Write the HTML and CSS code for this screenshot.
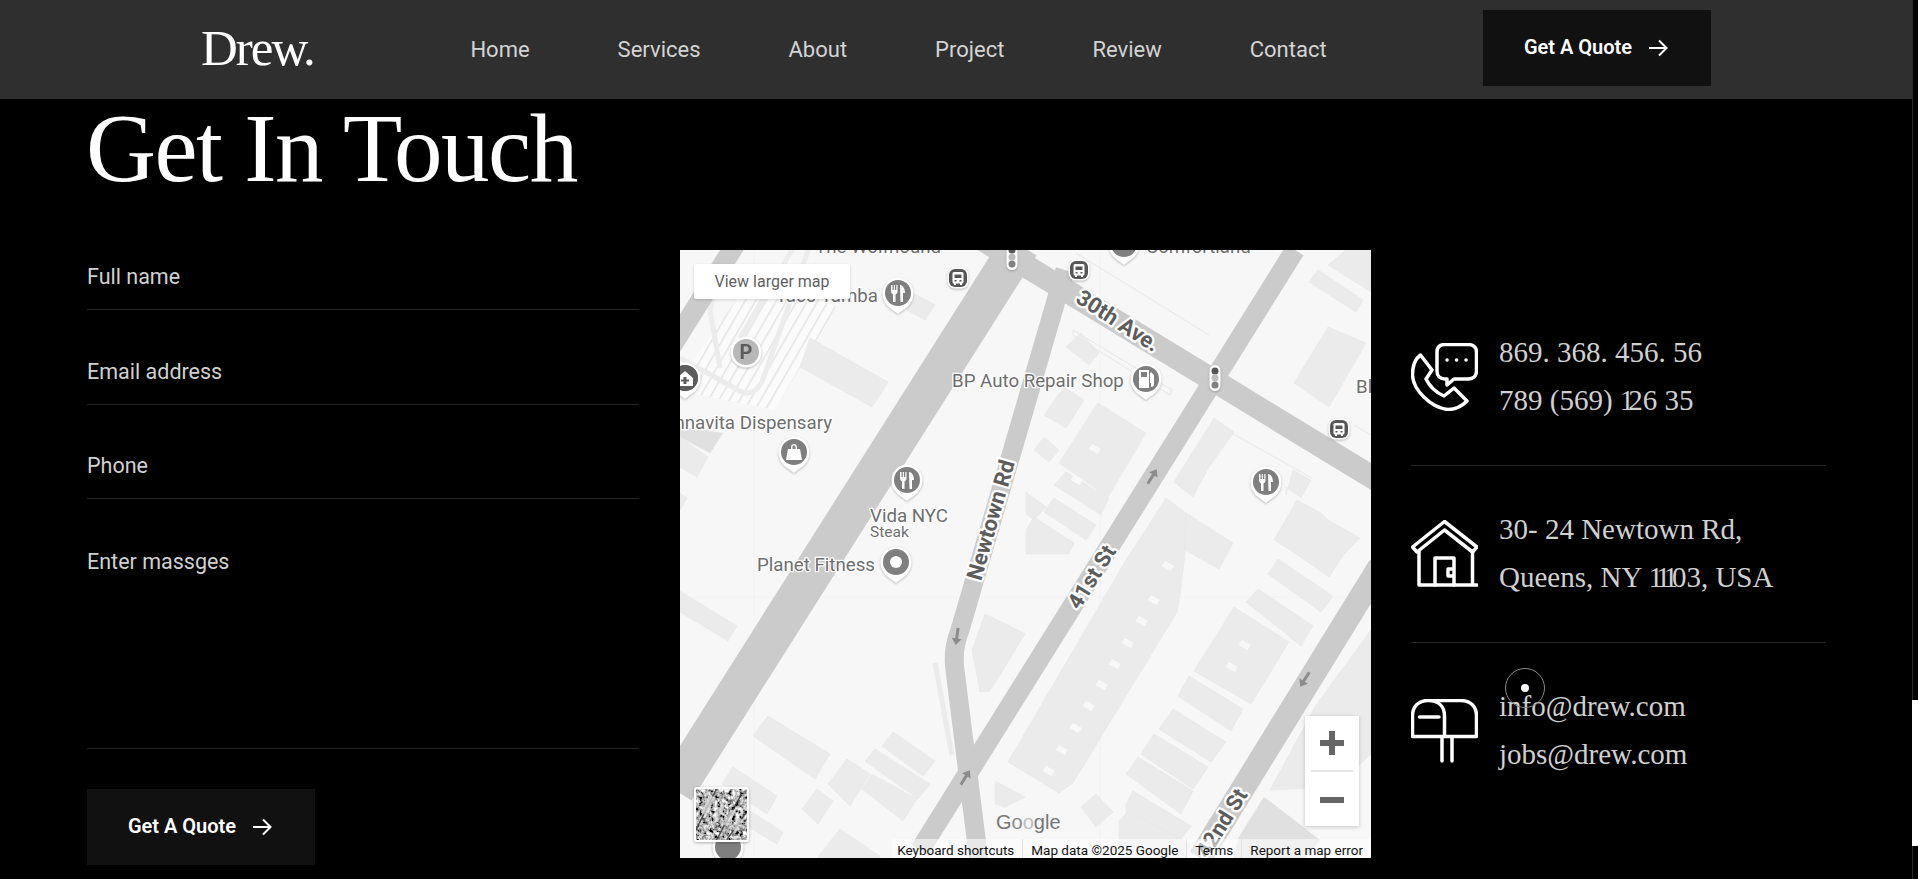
FILE: index.html
```html
<!DOCTYPE html>
<html lang="en">
<head>
    <meta charset="UTF-8">
    <meta name="viewport" content="width=device-width, initial-scale=1.0">
    <title>Drew. - Contact</title>
    <link rel="stylesheet" href="styles.css">
</head>
<body>
    <div class="page">
        <div class="main">
            <header class="site-header">
                <a class="logo" href="#">Drew.</a>
                <nav class="main-nav">
                    <a href="#">Home</a>
                    <a href="#">Services</a>
                    <a href="#">About</a>
                    <a href="#">Project</a>
                    <a href="#">Review</a>
                    <a href="#">Contact</a>
                </nav>
                <a class="btn" href="#">Get A Quote
                    <svg class="btn-arrow" viewBox="0 0 20 18"><path d="M1 9h17M11 1.500 18.500 9 11 16.500"/></svg>
                </a>
            </header>

            <section class="contact">
                <h1>Get In Touch</h1>
                <div class="contact-grid">
                    <form class="contact-form">
                        <input type="text" placeholder="Full name">
                        <input type="email" placeholder="Email address">
                        <input type="text" placeholder="Phone">
                        <textarea placeholder="Enter massges"></textarea>
                        <button class="btn" type="button">Get A Quote
                            <svg class="btn-arrow" viewBox="0 0 20 18"><path d="M1 9h17M11 1.500 18.500 9 11 16.500"/></svg>
                        </button>
                    </form>

                    <div class="map">
                        <svg class="map-canvas" viewBox="0 0 691 608">
                            <defs>
                                <pattern id="hatch" width="9" height="9" patternUnits="userSpaceOnUse" patternTransform="rotate(30)">
                                    <rect width="9" height="9" fill="#fbfbfb"/>
                                    <rect width="1.500" height="9" fill="#e4e4e4"/>
                                </pattern>
                                <g id="pin">
                                    <path class="pin-edge" d="M0 21C-4 17-15.500 13-15.500 0A15.500 15.500 0 1 1 15.500 0C15.500 13 4 17 0 21Z"/>
                                    <circle r="13" fill="#7f7f7f"/>
                                </g>
                                <g id="fork">
                                    <use href="#pin"/>
                                    <path class="pin-mark" d="M-7-8v6c0 2 1 3 2 3.500V9h2.500V1.500C-1.500 1-.5 0-.5-2v-6h-1.200v5H-3v-5h-1.200v5h-1.300v-5ZM2-8c2.500 0 5 3 5 8H5v9H2.500Z"/>
                                </g>
                                <g id="bus">
                                    <rect class="pin-edge" x="-10.500" y="-10.500" width="21" height="21" rx="7"/>
                                    <rect x="-9" y="-9" width="18" height="18" rx="6" fill="#565656"/>
                                    <path class="pin-mark" d="M-4-6H4A1.500 1.500 0 0 1 5.500-4.500V4A1.500 1.500 0 0 1 4 5.500V7H2V5.500H-2V7H-4V5.500A1.500 1.500 0 0 1-5.500 4V-4.500A1.500 1.500 0 0 1-4-6ZM-3.500-3.500V0H3.500V-3.500ZM-3.500 2V3.500H-1.500V2ZM1.500 2V3.500H3.500V2Z"/>
                                </g>
                                <g id="signal">
                                    <rect class="pin-edge" x="-5.500" y="-13" width="11" height="26" rx="5.500"/>
                                    <circle cy="-7" r="3.500" fill="#555"/>
                                    <circle r="3.500" fill="#bcbcbc"/>
                                    <circle cy="7" r="3.500" fill="#808080"/>
                                </g>
                                <path id="one-way" d="M-1.500 8V-2.500H-5L0-9 5-2.500H1.500V8Z"/>
                                <clipPath id="map-clip"><rect width="691" height="608"/></clipPath>
                            </defs>

                            <g clip-path="url(#map-clip)">
                                <rect class="map-ground" width="691" height="608"/>
                                <path class="tile-seam" d="M74 0V608M420 0V608M0 347H691"/>

                                <!-- parking lot -->
                                <path fill="url(#hatch)" d="M14 110 77 20 157 57 94 160 10 143Z"/>
                                <path class="path-light" d="M0 108 60 141Q72 148 82 132L130-5M45 -5 30 60 40 118M115-5 60 88"/>

                                <!-- buildings -->
                                <g class="bldg">
                                    <path class="bldg-dark" d="M0 177 43 183 30 203 0 187Z"/>
                                    <path d="M130 88 208 132 192 157 120 117Z"/>
                                    <path d="M233 43 255 55 245 70 227 60Z"/>
                                    <path d="M0 187 28 207 17 227 0 217ZM0 243 7 248 0 260Z"/>
                                    <path d="M386 97 401 83 419 103 409 115Z"/>
                                    <path d="M364 165 384 137 404 150 386 178Z"/>
                                    <path d="M379 213 418 153 466 183 428 247Z"/>
                                    <path d="M374 235 386 222 429 248 421 265Z"/>
                                    <path d="M364 262 374 248 416 275 406 290Z"/>
                                    <path d="M354 200 364 187 379 200 369 212Z"/>
                                    <path d="M346 242 366 257 354 270 346 264ZM346 280 354 267 394 293 389 304H346Z"/>
                                    <path d="M629 32 638 20 683 50 676 62Z"/>
                                    <path d="M614 133 648 77 686 93 649 157Z"/>
                                    <path d="M648 15 666 0H691V42Z"/>
                                    <path d="M494 232 534 168 554 182 539 203 529 217 513 247Z"/>
                                    <path d="M606 245 613 220 631 230 621 248 606 237Z"/>
                                    <path d="M594 290 617 250 641 263 648 270 680 288 664 304 649 327 616 304Z"/>
                                    <path d="M0 341 57 376 48 391 0 362Z"/>
                                    <path d="M73 486 88 466 150 504 135 529Z"/>
                                    <path d="M148 534 167 509 190 524 170 556Z"/>
                                    <path d="M122 559 137 539 153 551 138 574Z"/>
                                    <path d="M202 496 213 482 255 511 243 526Z"/>
                                    <path d="M185 511 195 499 250 534 238 549Z"/>
                                    <path d="M182 539 192 524 237 549 223 571Z"/>
                                    <path d="M42 534 53 517 97 546 87 564Z"/>
                                    <path d="M63 561 70 561 103 582 97 594 63 574Z"/>
                                    <path d="M137 608 160 579 200 606V608Z"/>
                                    <path d="M292 400 305 364 330 376 345 384 310 441 300 442Z"/>
                                    <path d="M315 531 345 547 325 557 315 554Z"/>
                                    <path d="M328 512 446 310 486 248 506 263 505 304 500 345 497 362 393 533 379 543Z"/>
                                    <path d="M506 263 553 293 539 319 505 300Z"/>
                                    <path d="M514 421 554 357 609 392 571 454Z"/>
                                    <path d="M498 446 509 426 563 459 551 481Z"/>
                                    <path d="M479 479 493 459 546 492 531 512Z"/>
                                    <path d="M461 504 474 484 528 517 513 539Z"/>
                                    <path d="M446 524 458 507 513 541 501 564Z"/>
                                    <path d="M446 554 453 541 511 576 501 589H446Z"/>
                                    <path d="M439 571 449 561 510 594 505 608H439Z"/>
                                    <path d="M566 352 578 339 633 376 621 396Z"/>
                                    <path d="M588 324 598 309 653 346 641 362Z"/>
                                    <path d="M401 557 416 544 433 562 416 577Z"/>
                                    <path d="M636 455 691 380V504L656 537 590 540Z"/>
                                    <path class="bldg-dark" d="M559 587 584 547 640 590 625 608H553Z"/>
                                </g>

                                <path class="bldg-window" d="M366 516l9 5-3.500 5-9-5ZM379 495l9 5-3.500 5-9-5ZM393 473l9 5-3.500 5-9-5ZM406 451l9 5-3.500 5-9-5ZM419 430l9 5-3.500 5-9-5ZM432 409l9 5-3.500 5-9-5ZM445 388l9 5-3.500 5-9-5ZM459 366l9 5-3.500 5-9-5ZM471 345l9 5-3.500 5-9-5ZM485 311l9 5-3.500 5-9-5ZM549 412l9 5-3.500 5-9-5ZM562 390l9 5-3.500 5-9-5ZM412 194l9 5-3.500 5-9-5ZM394 225l9 5-3.500 5-9-5Z"/>

                                <!-- thin property lines -->
                                <path class="prop-line" d="M393 80 492 140 490 145 393 85ZM396 3 529 85M546 180 632 228M674 175 691 185"/>

                                <!-- roads -->
                                <path class="road road-wide" d="M340-5-5 540"/>
                                <path class="road" d="M55-5-20 115"/>
                                <path class="road" d="M615 0 240 600"/>
                                <path class="road road-side" d="M385 20 280 380Q272 400 275 420L300 620"/>
                                <path class="road road-avenue" d="M290-18 700 232"/>
                                <path class="road road-east" d="M700 316 520 608"/>
                                <path class="path-pale" d="M255 413 272 505"/>

                                <use class="one-way" href="#one-way" transform="translate(472 227) rotate(32)"/>
                                <use class="one-way" href="#one-way" transform="translate(277 386) rotate(188)"/>
                                <use class="one-way" href="#one-way" transform="translate(285 528) rotate(32)"/>
                                <use class="one-way" href="#one-way" transform="translate(625 429) rotate(212)"/>

                                <!-- road names -->
                                <text class="road-label" text-anchor="middle" transform="translate(434 77) rotate(33)">30th Ave.</text>
                                <text class="road-label" text-anchor="middle" transform="translate(318 272) rotate(-74)">Newtown Rd</text>
                                <text class="road-label" text-anchor="middle" transform="translate(418 331) rotate(-58)">41st St</text>
                                <text class="road-label" text-anchor="middle" transform="translate(548 577) rotate(-58)">42nd St</text>

                                <!-- places -->
                                <text class="place" x="135" y="3">The Wolfhound</text>
                                <text class="place" x="466" y="3">Comfortland</text>
                                <text class="place" x="198" y="52" text-anchor="end">Taco Tamba</text>
                                <text class="place" x="272" y="137">BP Auto Repair Shop</text>
                                <text class="place" x="152" y="179" text-anchor="end">Cannavita Dispensary</text>
                                <text class="place" x="190" y="272">Vida NYC</text>
                                <text class="place place-sub" x="190" y="287">Steak</text>
                                <text class="place" x="77" y="321">Planet Fitness</text>
                                <text class="place" x="676" y="143">Bl</text>

                                <g class="pins">
                                    <g transform="translate(444 -6)"><use href="#pin"/><rect x="-10" y="-2" width="20" height="4" fill="#ddd"/></g>
                                    <use href="#fork" transform="translate(218 43)"/>
                                    <use href="#fork" transform="translate(227 230)"/>
                                    <use href="#fork" transform="translate(586 232)"/>
                                    <use href="#bus" transform="translate(278 28)"/>
                                    <use href="#bus" transform="translate(399 20)"/>
                                    <use href="#bus" transform="translate(659 179)"/>
                                    <use href="#signal" transform="translate(332 7)"/>
                                    <use href="#signal" transform="translate(535 128)"/>
                                    <g transform="translate(5 128)">
                                        <use href="#pin"/>
                                        <circle r="13" fill="#5c5c5c"/>
                                        <path class="pin-mark" d="M-8 0 0-7 8 0V8H-8ZM-1.500-1V1.500H-4V3.500H-1.500V6H1.500V3.500H4V1.500H1.500V-1Z"/>
                                    </g>
                                    <g transform="translate(66 102)">
                                        <circle class="pin-edge" r="15.500"/>
                                        <circle r="13" fill="#b8b8b8"/>
                                        <text class="pin-letter" text-anchor="middle" y="7">P</text>
                                    </g>
                                    <g transform="translate(114 202)">
                                        <use href="#pin"/>
                                        <path class="pin-mark" d="M-8 8-6-3H6L8 8ZM-3-3V-5C-3-9 3-9 3-5V-3H1.500V-5C1.500-7-1.500-7-1.500-5V-3Z"/>
                                    </g>
                                    <g transform="translate(466 129)">
                                        <use href="#pin"/>
                                        <path class="pin-mark" d="M-7-9H3V9H-7ZM-5-7V-2H1V-7ZM5-7 8-4V5Q8 8 5 8V4H4V-6Z"/>
                                    </g>
                                    <g transform="translate(216 312)">
                                        <use href="#pin"/>
                                        <circle r="6" fill="#fff"/>
                                    </g>
                                    <g transform="translate(48 597)">
                                        <use href="#pin"/>
                                    </g>
                                </g>
                            </g>
                        </svg>

                        <a class="map-larger" href="#">View larger map</a>

                        <div class="map-zoom">
                            <span class="zoom-plus"></span>
                            <span class="zoom-rule"></span>
                            <span class="zoom-minus"></span>
                        </div>

                        <div class="map-sat">
                            <svg viewBox="0 0 50 50">
                                <filter id="sat-noise" x="0" y="0" width="100%" height="100%">
                                    <feTurbulence type="fractalNoise" baseFrequency="0.28" numOctaves="3" seed="7"/>
                                    <feColorMatrix values="1.600 1.600 0 0 -1.150 1.600 1.600 0 0 -1.150 1.600 1.600 0 0 -1.150 0 0 0 0 1"/>
                                </filter>
                                <rect width="50" height="50" filter="url(#sat-noise)"/>
                                <path class="sat-shade" d="M20 0 0 40M44 6 20 50M50 22 30 50"/>
                                <path class="sat-roofs" d="M14 6l5 3-9 17-5-3ZM25 14l4 2-8 16-4-2ZM35 20l4 2-8 15-4-2ZM42 28l3 2-6 12-3-2Z"/>
                            </svg>
                        </div>

                        <span class="map-logo">G<i>o</i><b>o</b>gle</span>

                        <div class="map-attr">
                            <span>Keyboard shortcuts</span>
                            <span>Map data ©2025 Google</span>
                            <span>Terms</span>
                            <span>Report a map error</span>
                        </div>
                    </div>

                    <div class="contact-info">
                        <div class="info-row">
                            <svg class="info-icon" viewBox="0 0 67 68">
                                <path d="M9.500 12 21 27 15 36C19 44 26 50 33 53L43 45 56 58C50 64 44 66.500 37 66.500 20 65 2 47 1.500 32 1.500 23 4 16 9.500 12Z"/>
                                <path d="M36 42V36H34C29 36 26 33 26 28V9C26 4 29 1.500 34 1.500H57C62 1.500 65.500 4 65.500 9V28C65.500 33 62 36 57 36H43Z"/>
                                <path class="icon-dots" d="M36 17h.1M45.500 17h.1M55 17h.1"/>
                            </svg>
                            <p>869. 368. 456. 56<br>789 (569) <span class="narrow-one">1</span>26 35</p>
                        </div>
                        <div class="info-row">
                            <svg class="info-icon" viewBox="0 0 67 67">
                                <path d="M33.500 1.500 66 27 61.500 32 33.500 10 6 32 1.500 27Z"/>
                                <path d="M8 31V65H66M61.500 31V65"/>
                                <path d="M24 65V38H43V65M43 49H37V56H43"/>
                            </svg>
                            <p>30- 24 Newtown Rd,<br>Queens, NY <span class="narrow-one">111</span>03, USA</p>
                        </div>
                        <div class="info-row">
                            <svg class="info-icon" viewBox="0 0 67 64">
                                <path d="M1.500 37.500V17C1.500 7 8 1.500 17 1.500H50C59 1.500 65.500 7 65.500 17V37.500ZM17 1.500C27 1.500 33.500 7 33.500 17V37.500"/>
                                <path d="M8.500 18H28"/>
                                <path d="M31 38V62M41 38V62"/>
                            </svg>
                            <p>info@drew.com<br>jobs@drew.com</p>
                        </div>
                    </div>
                </div>
            </section>
        </div>
        <div class="scrollbar"><div class="scrollbar-thumb"></div></div>
    </div>

    <!-- custom cursor follower -->
    <div class="cursor"><span></span></div>
</body>
</html>
```

FILE: styles.css
```css
* {
    box-sizing: border-box;
}

html,
body {
    margin: 0;
    height: 100%;
    background: #000;
    overflow: hidden;
}

body {
    font-family: 'Roboto', sans-serif;
    color: #d0d0d0;
}

a {
    color: inherit;
    text-decoration: none;
}

.page {
    display: flex;
    height: 879px;
}

.main {
    flex: 1;
    min-width: 0;
}

/* header */
.site-header {
    display: flex;
    justify-content: space-between;
    align-items: center;
    height: 99px;
    padding: 10px 201px 13px;
    background: #2f2f2f;
}

.logo {
    width: 113px;
    font-family: 'Liberation Serif', serif;
    font-size: 51px;
    letter-spacing: -2px;
    line-height: 1;
    color: #fff;
    white-space: nowrap;
}

.main-nav {
    display: flex;
    gap: 88px;
    padding-top: 3px;
    font-size: 22px;
    color: #d4d4d4;
}

.btn {
    display: flex;
    justify-content: center;
    align-items: center;
    gap: 16px;
    width: 228px;
    height: 76px;
    padding: 0 2px 2px 0;
    border: none;
    background: #111;
    color: #fff;
    font-family: 'Roboto', sans-serif;
    font-size: 20px;
    font-weight: 600;
}

.btn-arrow {
    width: 20px;
    height: 18px;
    margin-top: 1px;
    fill: none;
    stroke: #fff;
    stroke-width: 2;
}

/* contact section */
.contact {
    padding-left: 87px;
}

.contact h1 {
    margin: 1px 0 53px -1px;
    font-family: 'Liberation Serif', serif;
    font-size: 97px;
    font-weight: 400;
    letter-spacing: -1.500px;
    line-height: 97px;
    color: #fff;
}

.contact-grid {
    display: flex;
    align-items: flex-start;
}

.contact-form {
    display: flex;
    flex-direction: column;
    width: 552px;
    margin-right: 41px;
}

.contact-form input,
.contact-form textarea {
    display: block;
    width: 100%;
    padding: 0 0 6px;
    border: none;
    border-bottom: 1px solid #262626;
    border-radius: 0;
    outline: none;
    background: transparent;
    color: #d0d0d0;
    font-family: 'Roboto', sans-serif;
    font-size: 21.500px;
}

.contact-form input {
    height: 60px;
    margin-bottom: 34.500px;
}

.contact-form textarea {
    height: 215.500px;
    padding-top: 15px;
    margin-bottom: 40px;
    resize: none;
}

.contact-form ::placeholder {
    color: #d0d0d0;
    opacity: 1;
}

/* map */
.map {
    position: relative;
    width: 691px;
    height: 608px;
    flex-shrink: 0;
    overflow: hidden;
    background: #f7f7f7;
}

.map-canvas {
    display: block;
    width: 691px;
    height: 608px;
}

.map-ground {
    fill: #f7f7f7;
}

.tile-seam {
    fill: none;
    stroke: #f2f2f2;
    stroke-width: 1;
}

.bldg path {
    fill: #ebebeb;
    stroke: #e4e4e4;
    stroke-width: 0.500;
}

.bldg .bldg-dark {
    fill: #e0e0e0;
}

.bldg-window {
    fill: #f8f8f8;
}

.prop-line {
    fill: none;
    stroke: #e8e8e8;
    stroke-width: 1;
}

.path-light {
    fill: none;
    stroke: #ececec;
    stroke-width: 5;
}

.path-pale {
    fill: none;
    stroke: #ebebeb;
    stroke-width: 5;
}

.road {
    fill: none;
    stroke: #cbcbcb;
    stroke-width: 20;
}

.road-wide {
    stroke-width: 39;
}

.road-avenue {
    stroke-width: 23;
}

.road-side {
    stroke-width: 19;
}

.road-east {
    stroke-width: 24;
}

.one-way {
    fill: #8c8c8c;
}

.road-label {
    font-family: 'Roboto', sans-serif;
    font-size: 22px;
    font-weight: 700;
    fill: #5c5c5c;
    stroke: #fff;
    stroke-width: 4.500;
    stroke-linejoin: round;
    paint-order: stroke;
}

.place {
    font-family: 'Roboto', sans-serif;
    font-size: 18.700px;
    fill: #6e6e6e;
    stroke: #fff;
    stroke-width: 2.500;
    stroke-linejoin: round;
    paint-order: stroke;
}

.place-sub {
    font-size: 15.500px;
}

.pins {
    filter: drop-shadow(0 1px 1px rgba(0, 0, 0, 0.25));
}

.pin-edge {
    fill: #fff;
}

.pin-mark {
    fill: #fff;
    fill-rule: evenodd;
}

.pin-letter {
    font-family: 'Roboto', sans-serif;
    font-size: 20px;
    font-weight: 700;
    fill: #5c5c5c;
}

.map-larger {
    position: absolute;
    left: 14px;
    top: 14px;
    display: flex;
    justify-content: center;
    align-items: center;
    width: 156px;
    height: 35px;
    border-radius: 2px;
    background: #fff;
    box-shadow: 0 1px 3px rgba(0, 0, 0, 0.15);
    color: #5f5f5f;
    font-size: 16px;
}

.map-zoom {
    position: absolute;
    left: 625px;
    top: 466px;
    width: 54px;
    height: 110px;
    background: #fff;
    box-shadow: 0 1px 4px rgba(0, 0, 0, 0.2);
}

.zoom-plus,
.zoom-minus {
    position: absolute;
    left: 15px;
    width: 24px;
    height: 6px;
    background: #666;
}

.zoom-plus {
    top: 24px;
}

.zoom-plus::after {
    content: "";
    position: absolute;
    left: 9px;
    top: -9px;
    width: 6px;
    height: 24px;
    background: #666;
}

.zoom-rule {
    position: absolute;
    left: 6px;
    top: 54px;
    width: 42px;
    height: 2px;
    background: #e6e6e6;
}

.zoom-minus {
    top: 81px;
}

.map-sat {
    position: absolute;
    left: 14px;
    top: 537px;
    width: 55px;
    height: 55px;
    border: 2px solid #fff;
    border-radius: 3px;
    box-shadow: 0 1px 3px rgba(0, 0, 0, 0.3);
    overflow: hidden;
}

.map-sat svg {
    display: block;
    width: 100%;
    height: 100%;
}

.sat-roofs {
    fill: #d8d8d8;
    opacity: 0.75;
}

.sat-shade {
    fill: none;
    stroke: #222;
    stroke-width: 1.500;
    opacity: 0.7;
}

.map-logo {
    position: absolute;
    left: 316px;
    top: 561px;
    font-family: 'Liberation Sans', sans-serif;
    font-size: 20px;
    color: #777;
}

.map-logo i {
    font-style: normal;
    color: #8a8a8a;
}

.map-logo b {
    font-weight: 400;
    color: #bdbdbd;
}

.map-attr {
    position: absolute;
    right: 0;
    bottom: 0;
    display: flex;
    gap: 8px;
    height: 19px;
    padding: 0 8px 0 5px;
    background: rgba(255, 255, 255, 0.55);
    color: #111;
    font-size: 13.500px;
    line-height: 22px;
}

.map-attr span + span {
    padding-left: 8px;
    border-left: 1px solid #e2e2e2;
}

/* contact details */
.contact-info {
    width: 415px;
    margin-left: 40px;
    padding-top: 39px;
}

.info-row {
    display: flex;
    align-items: center;
    gap: 21px;
    padding: 40px 0 41px;
    border-bottom: 1px solid #262626;
}

.info-row:last-child {
    border-bottom: none;
}

.info-row p {
    margin: 0;
    font-family: 'Liberation Serif', serif;
    font-size: 29px;
    line-height: 47.500px;
    color: #d0d0d0;
}

.narrow-one {
    letter-spacing: -6px;
}

.info-icon {
    width: 67px;
    flex-shrink: 0;
    fill: none;
    stroke: #fff;
    stroke-width: 3.500;
    stroke-linejoin: round;
    stroke-linecap: round;
}

.icon-dots {
    stroke-width: 3.500;
}

/* scrollbar */
.scrollbar {
    width: 6px;
    flex-shrink: 0;
    border-left: 1px solid #2a2a2a;
}

.scrollbar-thumb {
    width: 6px;
    height: 146px;
    margin: 700px 0 0 -1px;
    background: #fff;
}

/* cursor */
.cursor {
    position: absolute;
    left: 1505px;
    top: 668px;
    display: flex;
    justify-content: center;
    align-items: center;
    width: 40px;
    height: 40px;
    border: 1px solid #888;
    border-radius: 50%;
}

.cursor span {
    width: 8px;
    height: 8px;
    border-radius: 50%;
    background: #fff;
}
```
